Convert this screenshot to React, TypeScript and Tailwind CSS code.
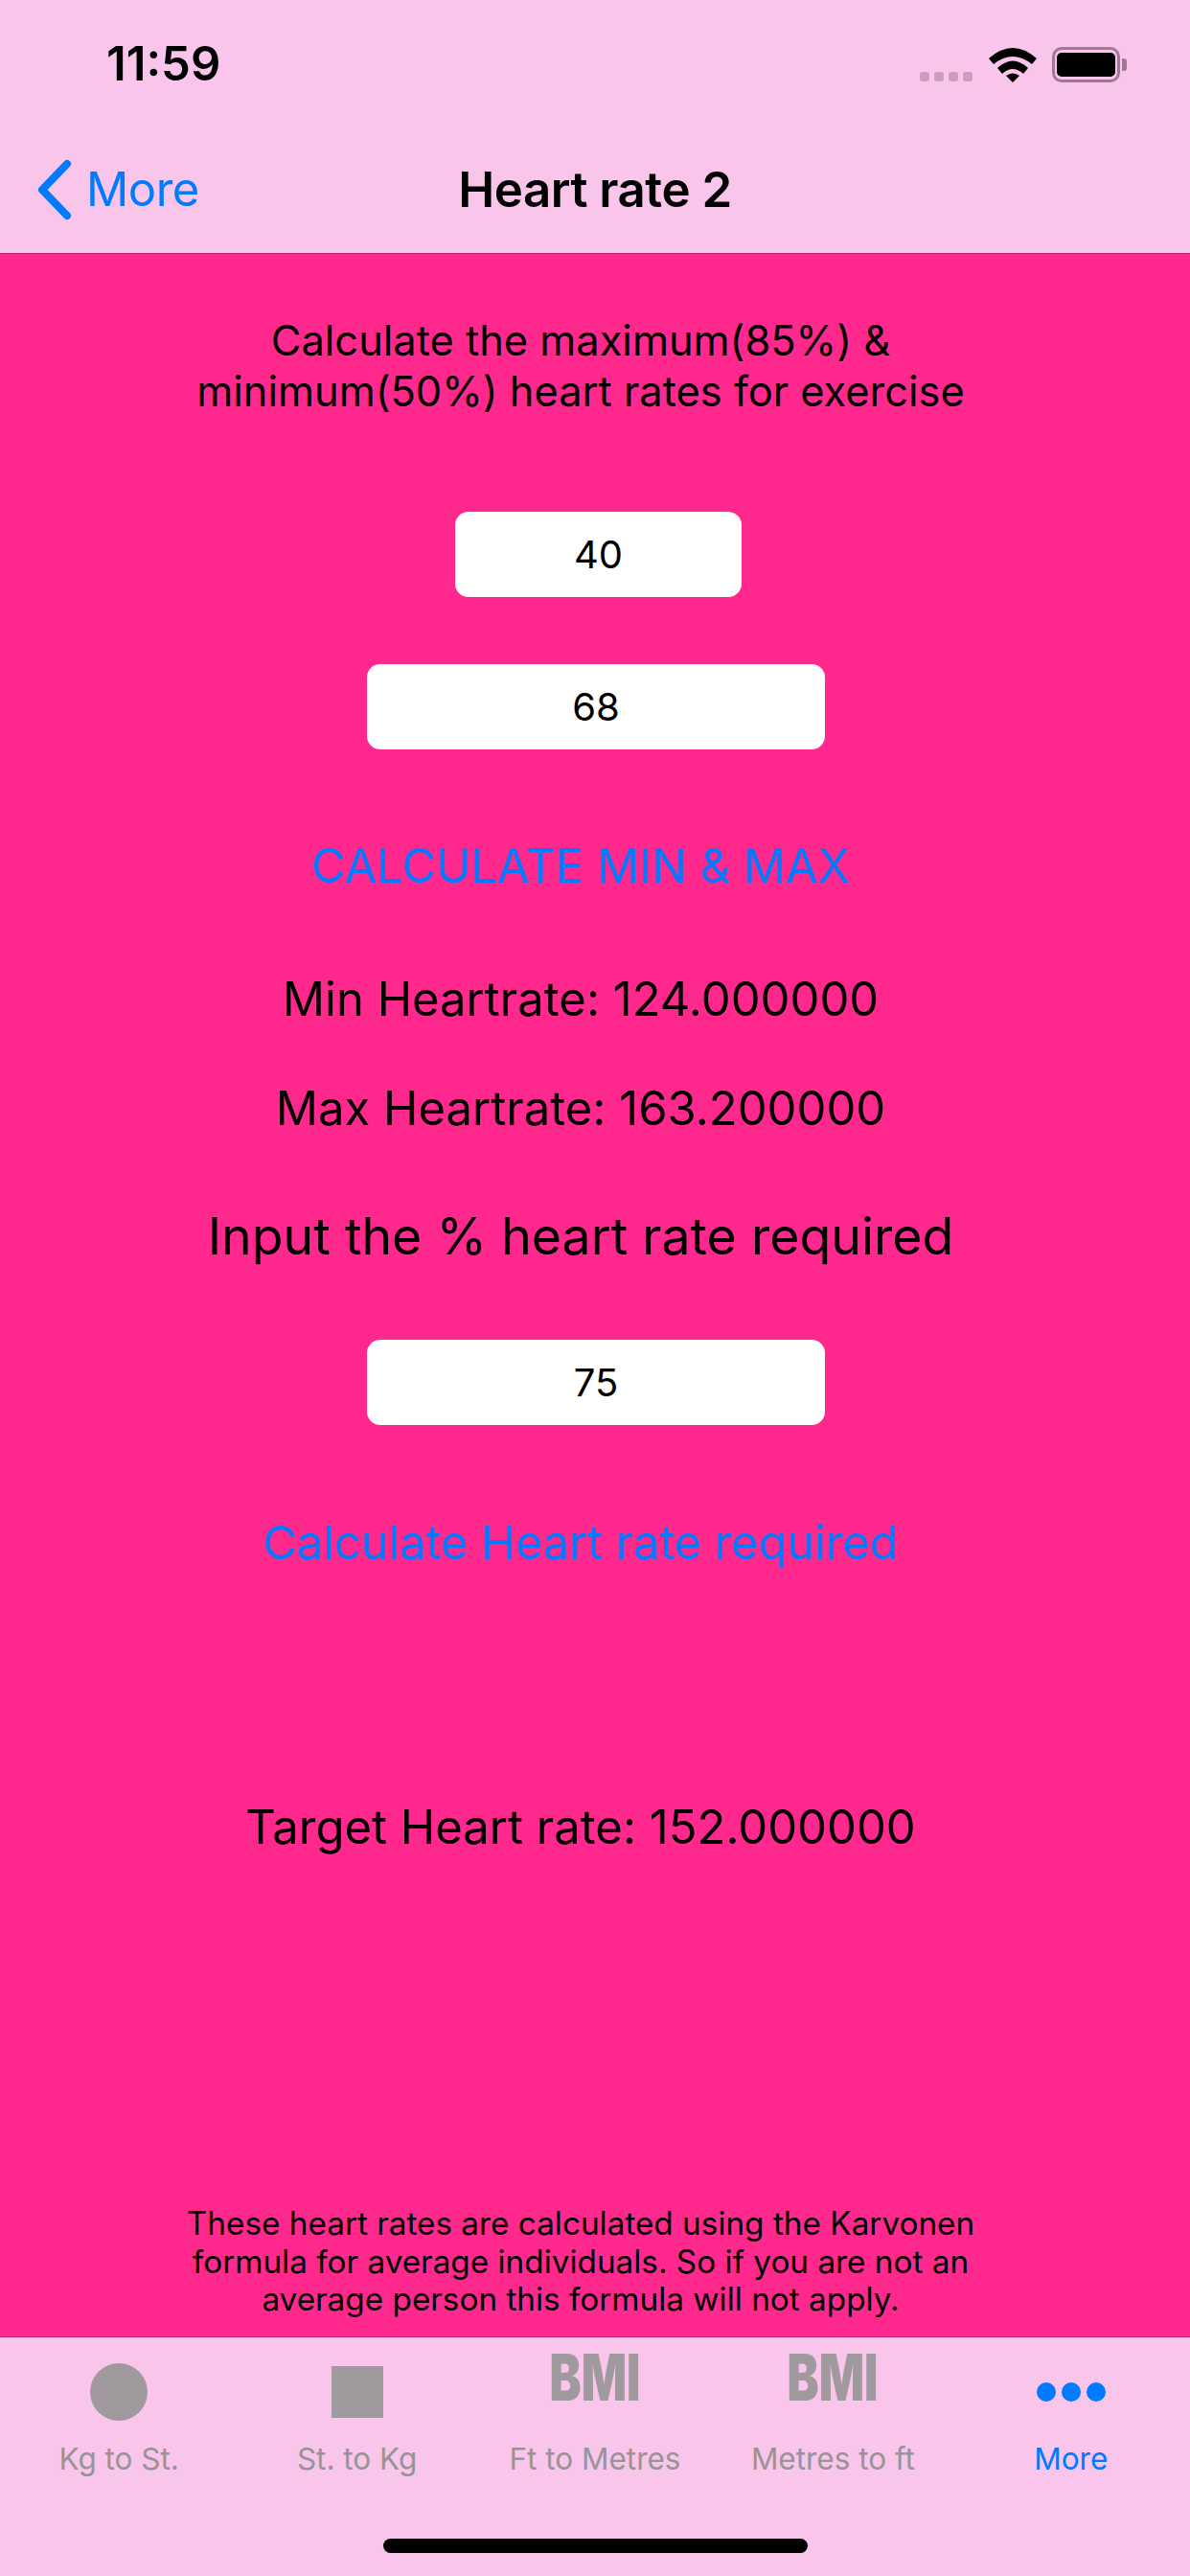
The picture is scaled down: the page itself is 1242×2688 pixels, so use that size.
const font = { fontFamily: "Inter, 'Noto Sans', sans-serif" };

// Bottom tabs
const tabs = [
  { label: "Kg to St.", icon: "circle" },
  { label: "St. to Kg", icon: "square" },
  { label: "Ft to Metres", icon: "bmi" },
  { label: "Metres to ft", icon: "bmi" },
  { label: "More", icon: "dots" },
];

function TabIcon({ icon }: { icon: string }) {
  if (icon === "circle") return <div className="mt-[27px] h-[60px] w-[60px] rounded-full bg-[#a09a9e]" />;
  if (icon === "square") return <div className="mt-[30px] h-[54px] w-[54px] bg-[#a09a9e]" />;
  if (icon === "dots")
    return (
      <div className="mt-[47px] flex h-[20px] gap-[6px]">
        <div className="h-[20px] w-[20px] rounded-full bg-[#007aff]" />
        <div className="h-[20px] w-[20px] rounded-full bg-[#007aff]" />
        <div className="h-[20px] w-[20px] rounded-full bg-[#007aff]" />
      </div>
    );
  return (
    <div className="mt-[17px] flex h-[50px] w-[130px] scale-x-[0.74] items-center justify-center text-[67px] font-black leading-[50px] text-[#a09a9e] blur-[0.7px]">
      BMI
    </div>
  );
}

function Field({ value, className }: { value: string; className: string }) {
  return (
    <div className={`flex h-[89px] items-center justify-center rounded-[14px] bg-white text-[40px] text-black ${className}`}>
      {value}
    </div>
  );
}

export default function App() {
  return (
    <div className="flex h-[2688px] w-[1242px] flex-col overflow-hidden bg-[#ff298d]" style={font}>
      {/* Header */}
      <header className="h-[265px] border-b-[1.5px] border-[#b8246f] bg-[#f9c5ea]">
        <div className="flex h-[166px] items-start pl-[111px] pr-[73px] pt-[49px]">
          <span className="text-[49px] font-semibold leading-[36px] text-black">11:59</span>
          <div className="ml-auto flex items-start">
            <div className="mt-[26px] flex gap-[5px]">
              {[0, 1, 2, 3].map((i) => (
                <div key={i} className="h-[10px] w-[10px] rounded-[3px] bg-[#cc9fbd]" />
              ))}
            </div>
            <svg width="50" height="37" viewBox="0 0 50 37" className="ml-[17px]">
              <path d="M0 12 Q25 -10 50 12 L45 18 Q25 2 5 18Z" fill="#000" />
              <path d="M9 22 Q25 7 41 22 L36 28 Q25 18 14 28Z" fill="#000" />
              <path d="M18 30 Q25 25 32 30 L25 37Z" fill="#000" />
            </svg>
            <div className="relative ml-[16px] flex h-[37px] w-[71px] items-center justify-center rounded-[10px] border-[3px] border-[#a17894]">
              <div className="h-[25px] w-[61px] rounded-[5px] bg-black" />
              <div className="absolute -right-[10px] top-[9px] h-[13px] w-[5px] rounded-r-[3px] bg-[#a17894]" />
            </div>
          </div>
        </div>
        <div className="relative flex h-[64px] items-center justify-center">
          <svg width="38" height="64" viewBox="0 0 38 64" className="absolute left-[38px] top-0">
            <path d="M32 5 L6 32 L32 59" fill="none" stroke="#007aff" strokeWidth="8" strokeLinecap="round" strokeLinejoin="round" />
          </svg>
          <span className="absolute left-[90px] text-[49px] leading-[64px] tracking-[-0.5px] text-[#007aff]">More</span>
          <span className="text-[51px] font-semibold leading-[64px] tracking-[-0.5px] text-black">Heart rate 2</span>
        </div>
      </header>

      {/* Calculator form */}
      <main className="flex flex-1 flex-col items-start text-black">
        <div className="mt-[64px] w-[1212px] text-center text-[43.4px] leading-[53px]">
          Calculate the maximum(85%) &amp;
          <br />
          minimum(50%) heart rates for exercise
        </div>
        <Field value="40" className="ml-[475px] mt-[99px] w-[299px]" />
        <Field value="68" className="ml-[383px] mt-[70px] w-[478px]" />
        <div className="mt-[92px] w-[1212px] text-center text-[48.8px] leading-[60px] text-[#007aff]">CALCULATE MIN &amp; MAX</div>
        <div className="mt-[79px] w-[1212px] text-center text-[49px] leading-[60px]">Min Heartrate: 124.000000</div>
        <div className="mt-[54px] w-[1212px] text-center text-[49px] leading-[60px]">Max Heartrate: 163.200000</div>
        <div className="mt-[70px] w-[1212px] text-center text-[53.6px] leading-[66px]">Input the % heart rate required</div>
        <Field value="75" className="ml-[383px] mt-[75px] w-[478px]" />
        <div className="mt-[93px] w-[1212px] text-center text-[48.6px] leading-[60px] text-[#007aff]">Calculate Heart rate required</div>
        <div className="mt-[237px] w-[1212px] text-center text-[49px] leading-[60px]">Target Heart rate: 152.000000</div>
        <div className="mt-[364px] w-[1212px] text-center text-[33.3px] leading-[39.5px]">
          These heart rates are calculated using the Karvonen
          <br />
          formula for average individuals. So if you are not an
          <br />
          average person this formula will not apply.
        </div>
      </main>

      {/* Tab bar */}
      <nav className="relative h-[250px] border-t-[1.5px] border-[#b8246f] bg-[#f9c5ea]">
        <div className="grid grid-cols-5">
          {tabs.map((tab) => (
            <div key={tab.label} className="relative flex h-[150px] flex-col items-center">
              <TabIcon icon={tab.icon} />
              <span
                className={`absolute top-[109px] whitespace-nowrap text-[31.5px] leading-[36px] ${
                  tab.icon === "dots" ? "text-[#007aff]" : "text-[#979496]"
                }`}
              >
                {tab.label}
              </span>
            </div>
          ))}
        </div>
        <div className="absolute bottom-[24px] left-[400px] h-[15px] w-[443px] rounded-full bg-black" />
      </nav>
    </div>
  );
}
